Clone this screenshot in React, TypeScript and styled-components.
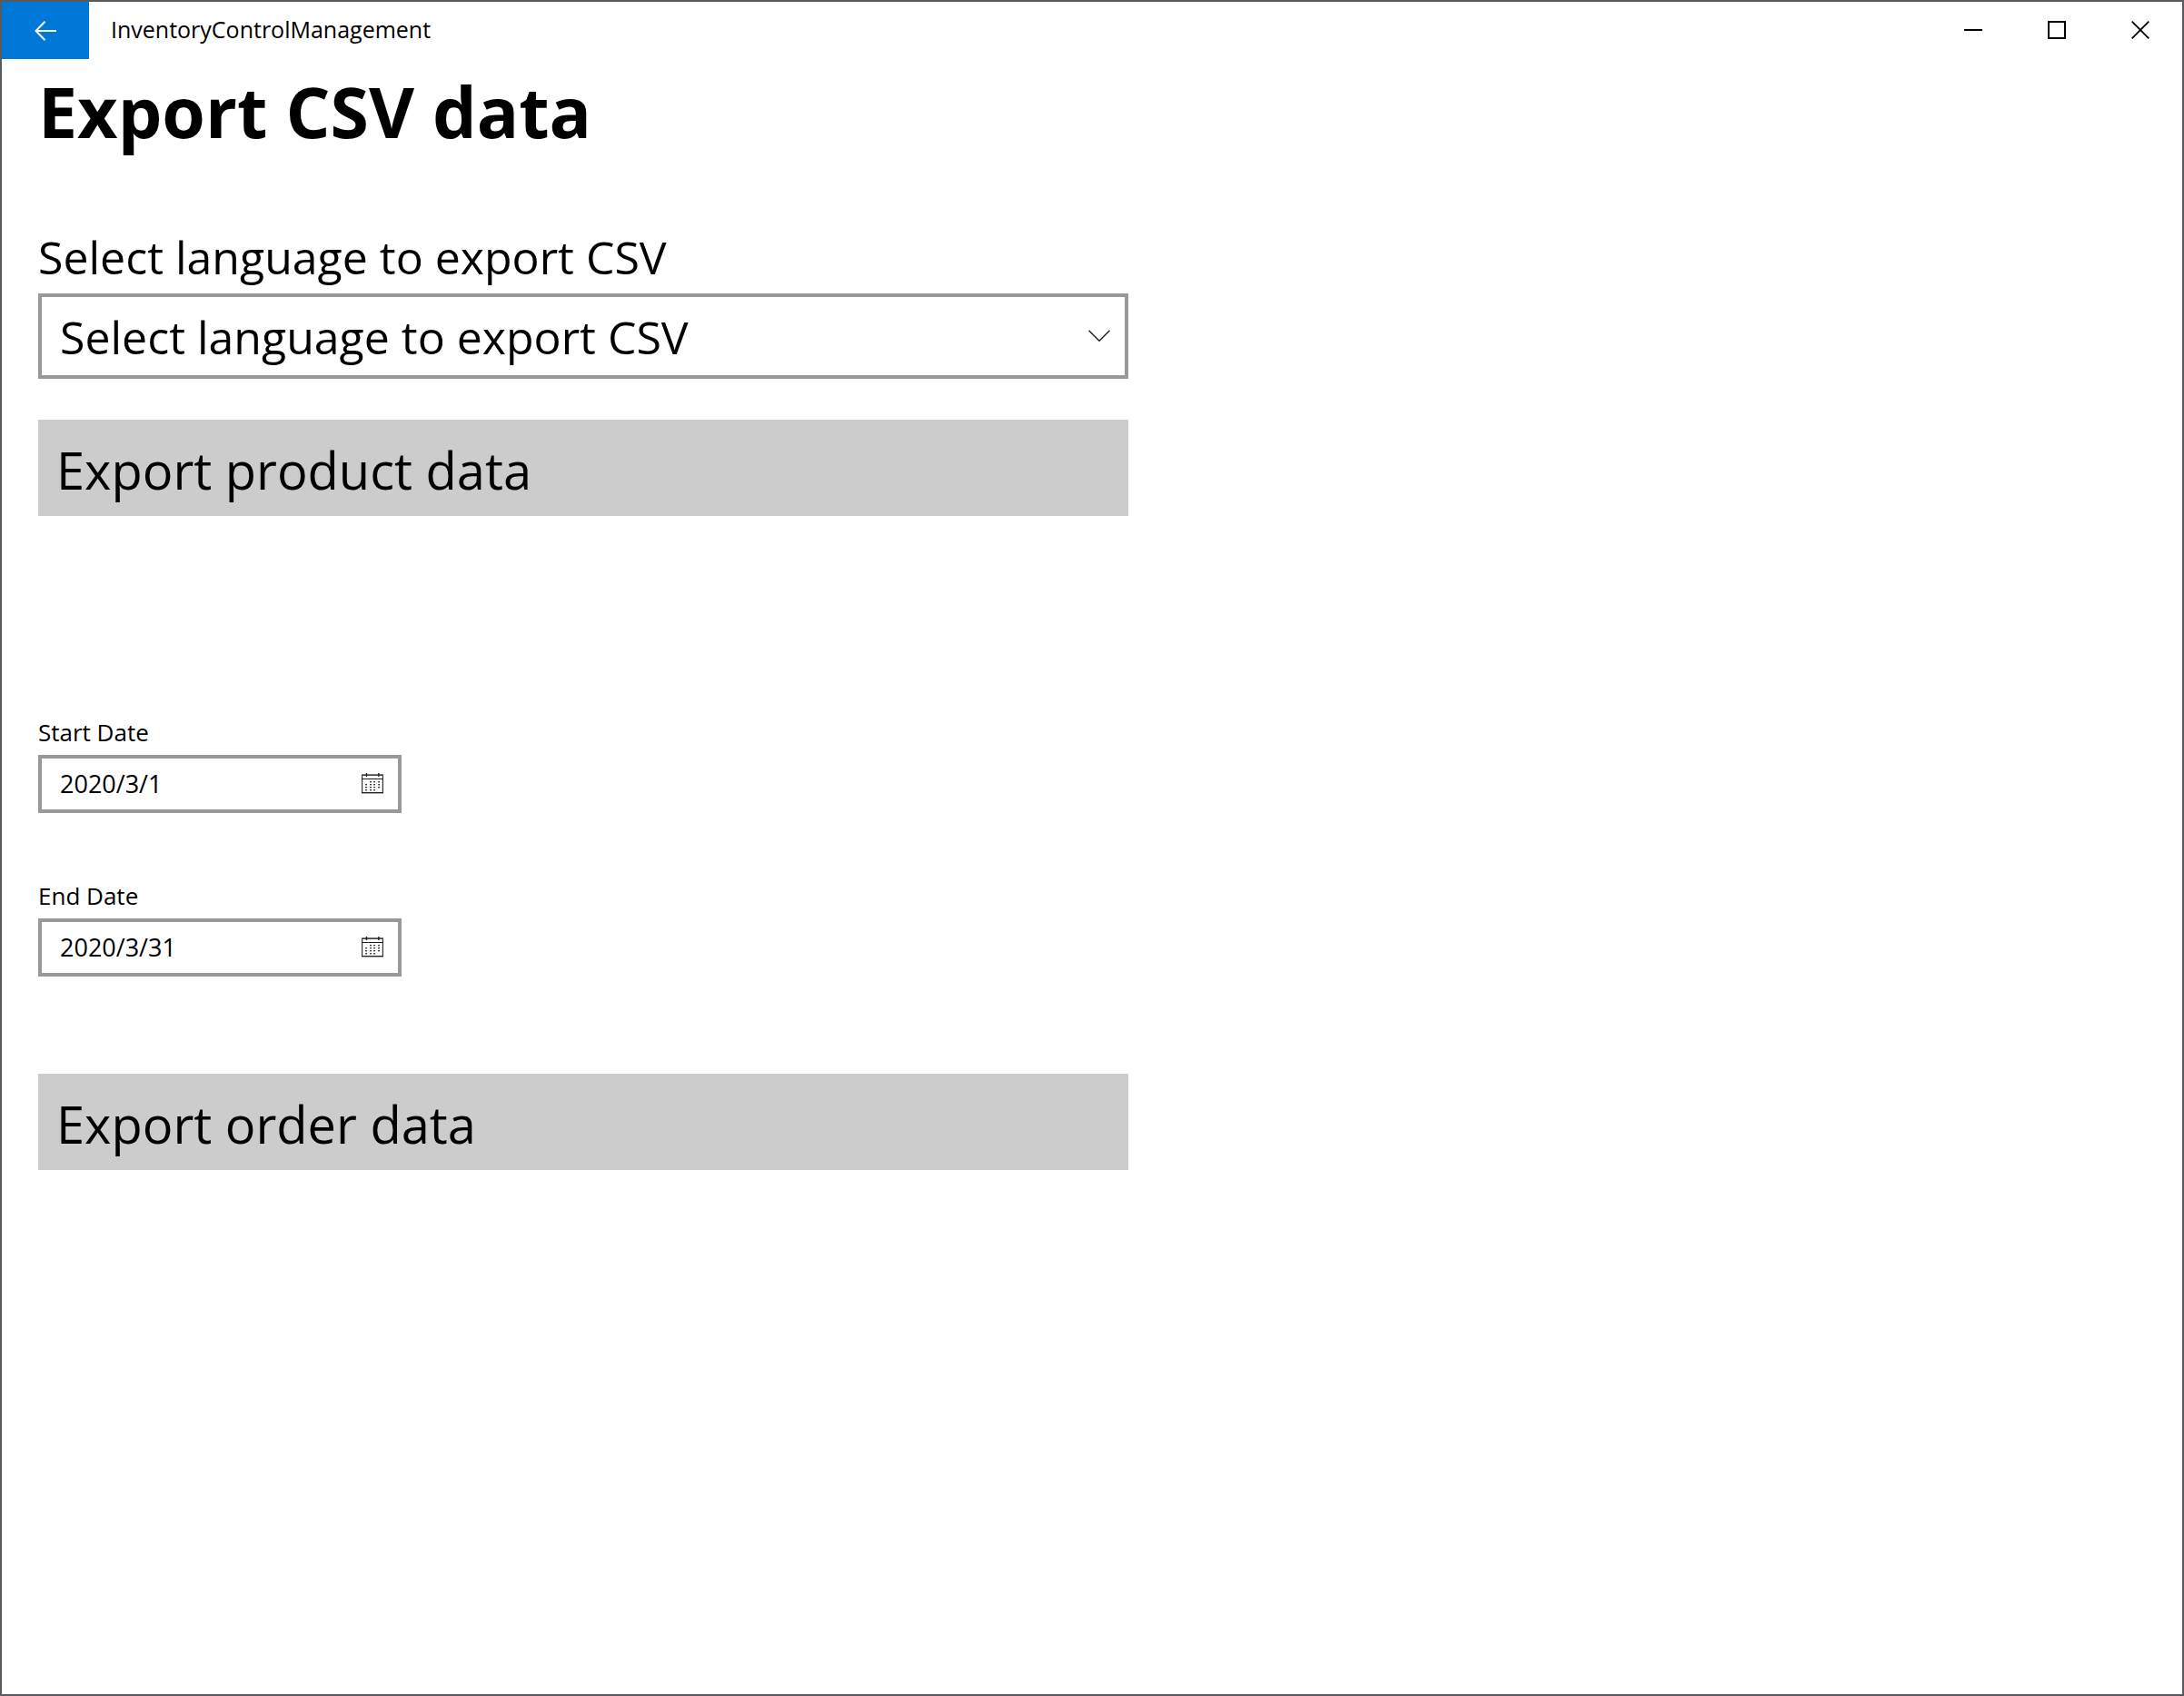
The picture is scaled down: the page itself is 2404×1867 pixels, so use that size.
import React, { useId, useState } from "react";
import styled, { createGlobalStyle } from "styled-components";

const GlobalStyle = createGlobalStyle`
  *, *::before, *::after { box-sizing: border-box; }
  body { margin: 0; background: #fff; }
  button, input, select { font: inherit; color: inherit; margin: 0; border-radius: 0; }
`;

const AppWindow = styled.div`
  display: flex;
  flex-direction: column;
  min-height: 100vh;
  border: 2px solid #5a5a5e;
  background: #fff;
  color: #000;
  font-family: "Open Sans", "Noto Sans", sans-serif;
`;

const TitleBar = styled.header`
  display: flex;
  align-items: stretch;
  height: 63px;
`;

const BackButton = styled.button`
  display: grid;
  place-items: center;
  width: 96px;
  padding: 0;
  border: 0;
  background: #0078d7;
  color: #fff;
`;

const AppName = styled.span`
  flex: 1;
  padding-left: 24px;
  font-size: 25px;
  line-height: 60px;
`;

const CaptionButton = styled.button`
  display: grid;
  place-items: center;
  width: 92px;
  height: 62px;
  padding: 0;
  border: 0;
  background: transparent;
`;

const Content = styled.main`
  padding: 0 40px;
`;

const PageTitle = styled.h1`
  margin: 0 0 68px;
  font-size: 77px;
  font-weight: 700;
  line-height: 116px;
`;

const ExportForm = styled.form`
  display: flex;
  flex-direction: column;
  width: 100%;
  max-width: 1200px;
`;

const Field = styled.div`
  display: flex;
  flex-direction: column;
  gap: 6px;
`;

const LargeLabel = styled.label`
  font-size: 50px;
  line-height: 68px;
`;

const SelectBox = styled.div`
  display: grid;
  grid-template-columns: 1fr 64px;
  align-items: center;

  & > svg {
    grid-area: 1 / 2;
    justify-self: start;
    margin-left: 20px;
    pointer-events: none;
  }
`;

const LanguageSelect = styled.select`
  grid-area: 1 / 1 / 2 / 3;
  height: 94px;
  padding: 2px 64px 0 20px;
  border: 4px solid #999;
  background: #fff;
  font-size: 50px;
  appearance: none;
`;

const ExportButton = styled.button`
  height: 106px;
  padding: 4px 20px 0;
  border: 0;
  background: #ccc;
  font-size: 56px;
  line-height: 80px;
  text-align: left;
`;

const ProductSection = styled.section`
  display: flex;
  flex-direction: column;
  gap: 45px;
  margin-bottom: 219px;
`;

const DateRange = styled.section`
  display: flex;
  flex-direction: column;
  gap: 72px;
  margin-bottom: 107px;
`;

const DateLabel = styled.label`
  font-size: 26px;
  line-height: 38px;
`;

const DateBox = styled.div`
  display: flex;
  width: 400px;
  height: 64px;
  border: 4px solid #999;
  background: #fff;
`;

const DateInput = styled.input`
  flex: 1;
  min-width: 0;
  padding: 0 0 2px 20px;
  border: 0;
  background: transparent;
  font-size: 27px;
`;

const CalendarButton = styled.button`
  display: grid;
  place-items: center;
  width: 56px;
  padding: 0;
  border: 0;
  background: transparent;
`;

const BackIcon = () => (
  <svg width="24" height="22" viewBox="0 0 24 22" fill="none" stroke="currentColor" strokeWidth="2" aria-hidden="true">
    <path d="M1.5 11H24M11.5 0.8L1.5 11L11.5 21.2" />
  </svg>
);

const MinimizeIcon = () => (
  <svg width="20" height="20" viewBox="0 0 20 20" aria-hidden="true">
    <path d="M0 9h20v2H0z" />
  </svg>
);

const MaximizeIcon = () => (
  <svg width="20" height="20" viewBox="0 0 20 20" fill="none" stroke="currentColor" strokeWidth="2" aria-hidden="true">
    <path d="M1 1h18v18H1z" />
  </svg>
);

const CloseIcon = () => (
  <svg width="20" height="20" viewBox="0 0 20 20" fill="none" stroke="currentColor" strokeWidth="1.8" aria-hidden="true">
    <path d="M0.7 0.7L19.3 19.3M19.3 0.7L0.7 19.3" />
  </svg>
);

const ChevronIcon = () => (
  <svg width="24" height="14" viewBox="0 0 24 14" fill="none" stroke="#222" strokeWidth="1.5" aria-hidden="true">
    <path d="M0.5 0.8L12 12.3L23.5 0.8" />
  </svg>
);

const calendarDots = [
  [9, 13, 18],
  [4, 9, 13, 18],
  [4, 9, 13, 18],
  [4, 9, 13],
];

const CalendarIcon = () => (
  <svg width="24" height="24" viewBox="0 0 24 24" fill="none" aria-hidden="true">
    <path d="M0.6 1.5v21M23.4 1.5v21" stroke="#333" strokeWidth="1.2" />
    <path d="M0 1.5h24" stroke="#777" />
    <path d="M0 2.5h24" stroke="#444" />
    <path d="M0 6.5h24M0 21.5h24" stroke="#222" strokeWidth="1.2" />
    <path d="M0 22.5h24" stroke="#aaa" />
    <path d="M5.5 0v4M18.9 0v4" stroke="#222" strokeWidth="1.4" />
    {calendarDots.map((row, r) =>
      row.map((x) => <rect key={`${r}-${x}`} x={x + 0.2} y={9 + r * 3} width="1.7" height="1.4" fill="#222" />)
    )}
  </svg>
);

interface DateFieldProps {
  label: string;
  initial: string;
}

const DateField = ({ label, initial }: DateFieldProps) => {
  const id = useId();
  const [value, setValue] = useState(initial);
  return (
    <Field>
      <DateLabel htmlFor={id}>{label}</DateLabel>
      <DateBox>
        <DateInput id={id} type="text" value={value} onChange={(e) => setValue(e.target.value)} />
        <CalendarButton type="button" aria-label={`Choose ${label}`}>
          <CalendarIcon />
        </CalendarButton>
      </DateBox>
    </Field>
  );
};

export default function App() {
  return (
    <>
      <GlobalStyle />
      <AppWindow>
        <TitleBar>
          <BackButton type="button" aria-label="Back">
            <BackIcon />
          </BackButton>
          <AppName>InventoryControlManagement</AppName>
          <CaptionButton type="button" aria-label="Minimize">
            <MinimizeIcon />
          </CaptionButton>
          <CaptionButton type="button" aria-label="Maximize">
            <MaximizeIcon />
          </CaptionButton>
          <CaptionButton type="button" aria-label="Close">
            <CloseIcon />
          </CaptionButton>
        </TitleBar>
        <Content>
          <PageTitle>Export CSV data</PageTitle>
          <ExportForm onSubmit={(e) => e.preventDefault()}>
            <ProductSection>
              <Field>
                <LargeLabel htmlFor="language">Select language to export CSV</LargeLabel>
                <SelectBox>
                  <LanguageSelect id="language">
                    <option>Select language to export CSV</option>
                  </LanguageSelect>
                  <ChevronIcon />
                </SelectBox>
              </Field>
              <ExportButton type="button">Export product data</ExportButton>
            </ProductSection>
            <DateRange>
              <DateField label="Start Date" initial="2020/3/1" />
              <DateField label="End Date" initial="2020/3/31" />
            </DateRange>
            <ExportButton type="button">Export order data</ExportButton>
          </ExportForm>
        </Content>
      </AppWindow>
    </>
  );
}
